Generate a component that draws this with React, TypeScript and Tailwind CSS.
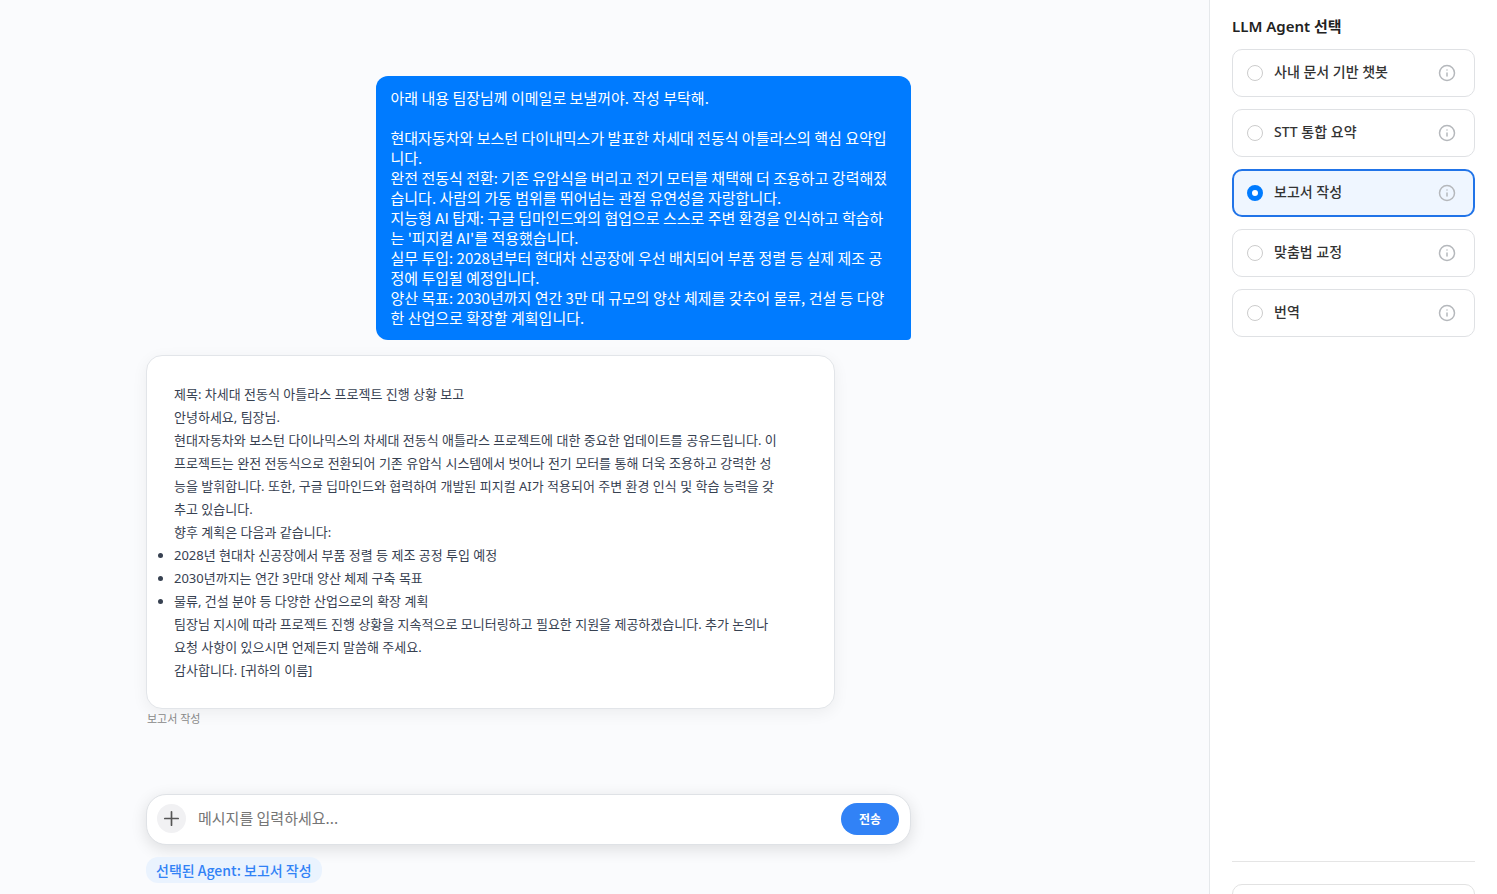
import { useState } from 'react';
import { Info, Plus } from 'lucide-react';

const agents = [
  { id: 'chatbot', name: '사내 문서 기반 챗봇' },
  { id: 'stt', name: 'STT 통합 요약' },
  { id: 'report', name: '보고서 작성' },
  { id: 'spelling', name: '맞춤법 교정' },
  { id: 'translate', name: '번역' },
];

const question = `아래 내용 팀장님께 이메일로 보낼꺼야. 작성 부탁해.

현대자동차와 보스턴 다이내믹스가 발표한 차세대 전동식 아틀라스의 핵심 요약입
니다.
완전 전동식 전환: 기존 유압식을 버리고 전기 모터를 채택해 더 조용하고 강력해졌
습니다. 사람의 가동 범위를 뛰어넘는 관절 유연성을 자랑합니다.
지능형 AI 탑재: 구글 딥마인드와의 협업으로 스스로 주변 환경을 인식하고 학습하
는 '피지컬 AI'를 적용했습니다.
실무 투입: 2028년부터 현대차 신공장에 우선 배치되어 부품 정렬 등 실제 제조 공
정에 투입될 예정입니다.
양산 목표: 2030년까지 연간 3만 대 규모의 양산 체제를 갖추어 물류, 건설 등 다양
한 산업으로 확장할 계획입니다.`;

const answerIntro = `제목: 차세대 전동식 아틀라스 프로젝트 진행 상황 보고
안녕하세요, 팀장님.
현대자동차와 보스턴 다이나믹스의 차세대 전동식 애틀라스 프로젝트에 대한 중요한 업데이트를 공유드립니다. 이
프로젝트는 완전 전동식으로 전환되어 기존 유압식 시스템에서 벗어나 전기 모터를 통해 더욱 조용하고 강력한 성
능을 발휘합니다. 또한, 구글 딥마인드와 협력하여 개발된 피지컬 AI가 적용되어 주변 환경 인식 및 학습 능력을 갖
추고 있습니다.
향후 계획은 다음과 같습니다:`;

const plans = [
  '2028년 현대차 신공장에서 부품 정렬 등 제조 공정 투입 예정',
  '2030년까지는 연간 3만대 양산 체제 구축 목표',
  '물류, 건설 분야 등 다양한 산업으로의 확장 계획',
];

const answerOutro = `팀장님 지시에 따라 프로젝트 진행 상황을 지속적으로 모니터링하고 필요한 지원을 제공하겠습니다. 추가 논의나
요청 사항이 있으시면 언제든지 말씀해 주세요.
감사합니다. [귀하의 이름]`;

export default function App() {
  const [selected, setSelected] = useState('report');
  const current = agents.find((a) => a.id === selected);

  return (
    <div className="flex h-screen overflow-hidden bg-[#fafbfd] font-['Noto_Sans','Noto_Sans_CJK_KR',sans-serif]">
      {/* Chat */}
      <main className="flex flex-1 flex-col pl-[146px] pr-6">
        <div className="flex w-full max-w-[765px] flex-1 flex-col">
          <div className="mt-[76px] w-[70%] self-end whitespace-pre rounded-xl rounded-br-sm bg-[#007bff] px-[15px] py-3 font-['Noto_Sans_CJK_KR',sans-serif] text-[15px] leading-5 text-white">
            {question}
          </div>

          <article className="mt-[15px] w-[90%] whitespace-pre rounded-2xl border border-[#e2e5e9] bg-white px-[27px] pt-[27px] pb-[26px] text-[13px] leading-[23px] text-[#374151] shadow-[0_4px_16px_rgba(0,0,0,0.06)]">
            <p>{answerIntro}</p>
            <ul className="list-disc">
              {plans.map((plan) => (
                <li key={plan}>{plan}</li>
              ))}
            </ul>
            <p>{answerOutro}</p>
          </article>
          <p className="mt-px ml-px text-[11px] leading-[18px] text-[#888888]">보고서 작성</p>

          {/* Composer */}
          <form
            onSubmit={(e) => e.preventDefault()}
            className="mt-auto flex h-[51px] shrink-0 items-center rounded-[20px] border border-[#dfe2e6] bg-white pr-[11px] pb-0.5 pl-[10px] shadow-[0_4px_16px_rgba(0,0,0,0.12)]"
          >
            <button type="button" aria-label="파일 첨부" className="flex size-[29px] items-center justify-center rounded-full bg-[#f1f1f3] text-[#555555]">
              <Plus size={23} strokeWidth={1.75} />
            </button>
            <input
              type="text"
              aria-label="메시지"
              placeholder="메시지를 입력하세요..."
              className="ml-3 min-w-0 flex-1 bg-transparent font-['Noto_Sans_CJK_KR',sans-serif] text-[15px] text-[#333333] outline-none placeholder:text-[#757575]"
            />
            <button type="submit" className="h-8 w-[58px] rounded-full bg-[#3182f6] pt-0.5 text-xs font-bold text-white">
              전송
            </button>
          </form>
          <div className="mt-3 mb-[11px] self-start rounded-xl bg-[#eaf3fe] px-[10px] font-['Noto_Sans_CJK_KR',sans-serif] text-sm leading-[26px] font-medium text-[#3182f6]">
            선택된 Agent: {current?.name}
          </div>
        </div>
      </main>

      {/* Agent picker */}
      <aside className="flex w-72 shrink-0 flex-col border-l border-[#e5e8eb] bg-white px-[22px]">
        <h2 className="mt-[15px] text-[15px] leading-[22px] font-semibold text-[#222222]">LLM Agent 선택</h2>
        <div className="mt-3 flex flex-col gap-3">
          {agents.map(({ id, name }) => (
            <label
              key={id}
              className={`flex h-12 cursor-pointer items-center rounded-[10px] ${
                selected === id ? 'border-2 border-[#2174e8] bg-[#eff6ff] px-[13px]' : 'border border-[#dfe1e4] bg-white px-[14px]'
              }`}
            >
              <input
                type="radio"
                name="agent"
                value={id}
                checked={selected === id}
                onChange={() => setSelected(id)}
                className="size-4 appearance-none rounded-full border border-[#cccccc] bg-white checked:border-[5px] checked:border-[#007bff]"
              />
              <span className="ml-[11px] flex-1 pb-0.5 text-sm leading-5 font-medium text-[#333333]">{name}</span>
              <Info size={18} strokeWidth={2} className="mr-1 text-[#b5b8bc]" />
            </label>
          ))}
        </div>
        <div className="mt-auto h-[33px] shrink-0 border-t border-[#e5e5e5] pt-[22px]">
          <div className="h-12 rounded-[10px] border border-[#e2e2e2]" />
        </div>
      </aside>
    </div>
  );
}
